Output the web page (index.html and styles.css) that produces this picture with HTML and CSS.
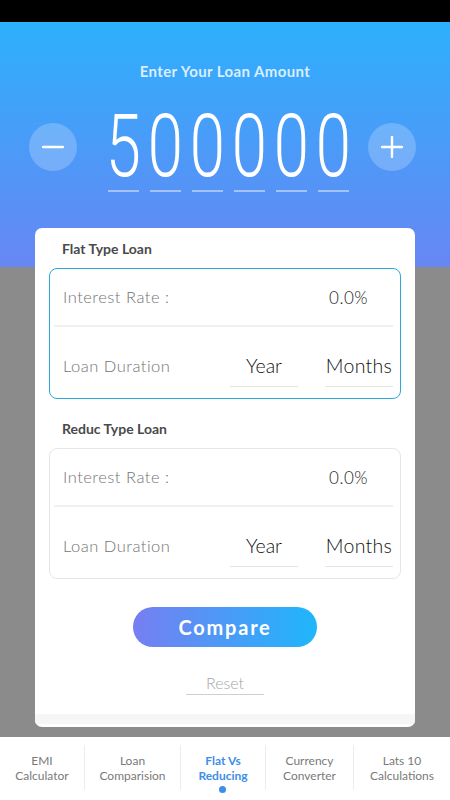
FILE: index.html
```html
<html>
<head>
<meta charset="utf-8">
<link rel="stylesheet" href="styles.css">
<title>Flat Vs Reducing</title>
</head>
<body>
<div class="statusbar"></div>
<div class="main">
  <div class="amount-title">Enter Your Loan Amount</div>
  <div class="amount-row">
    <div class="round-btn minus"><svg width="22" height="22" viewBox="0 0 22 22"><path d="M1 11H21" stroke="#fff" stroke-width="2.4" stroke-linecap="round"/></svg></div>
    <div class="digits">
      <span class="digit"><span>5</span></span>
      <span class="digit"><span>0</span></span>
      <span class="digit"><span>0</span></span>
      <span class="digit"><span>0</span></span>
      <span class="digit"><span>0</span></span>
      <span class="digit"><span>0</span></span>
    </div>
    <div class="round-btn plus"><svg width="22" height="22" viewBox="0 0 22 22"><path d="M1 11H21M11 1V21" stroke="#fff" stroke-width="2.4" stroke-linecap="round"/></svg></div>
  </div>

  <div class="card">
    <div class="section-title">Flat Type Loan</div>
    <div class="loan-box active">
      <div class="rate-row">
        <span class="label">Interest Rate :</span>
        <span class="rate">0.0%</span>
      </div>
      <div class="divider"></div>
      <div class="dur-row">
        <span class="label">Loan Duration</span>
        <span class="dur-field year">Year</span>
        <span class="dur-field months">Months</span>
      </div>
    </div>

    <div class="section-title second">Reduc Type Loan</div>
    <div class="loan-box">
      <div class="rate-row">
        <span class="label">Interest Rate :</span>
        <span class="rate">0.0%</span>
      </div>
      <div class="divider"></div>
      <div class="dur-row">
        <span class="label">Loan Duration</span>
        <span class="dur-field year">Year</span>
        <span class="dur-field months">Months</span>
      </div>
    </div>

    <div class="compare">Compare</div>
    <div class="reset-wrap"><span class="reset">Reset</span></div>
    <div class="card-foot"></div>
  </div>
</div>

<div class="tabbar">
  <div class="tab w1">EMI<br>Calculator</div>
  <div class="tab w2">Loan<br>Comparision</div>
  <div class="tab w3 on">Flat Vs<br>Reducing<span class="dot"></span></div>
  <div class="tab w4">Currency<br>Converter</div>
  <div class="tab w5">Lats 10<br>Calculations</div>
</div>
</body>
</html>
```
FILE: styles.css
```css
body { margin: 0; width: 450px; height: 800px; overflow: hidden;
  font-family: Lato, "Open Sans", sans-serif; background: #fff; }

.statusbar { height: 22px; background: #000; }

.main { height: 715px; box-sizing: border-box; padding-top: 41px;
  background: linear-gradient(to bottom, #2db0fd 0px, #6886f4 245px, #8b8b8b 245px, #8b8b8b 100%); }

.amount-title { text-align: center; color: #d9eeff; font-size: 15px; font-weight: 700;
  line-height: 16px; letter-spacing: 0.4px; }

.amount-row { display: flex; align-items: flex-start; padding-left: 29px; margin-top: 25px; height: 124px; }
.round-btn { width: 48px; height: 48px; border-radius: 50%; background: rgba(255,255,255,0.22);
  display: flex; align-items: center; justify-content: center; margin-top: 19px; }
.round-btn.minus { margin-right: 31px; }
.round-btn.plus { margin-left: 19px; }

.digits { display: flex; gap: 11px; }
.digit { width: 31px; height: 84px; padding-bottom: 2px; border-bottom: 2px solid rgba(255,255,255,0.45);
  color: #fff; font-family: Roboto, sans-serif; font-weight: 300; font-size: 88px;
  line-height: 84px; display: flex; justify-content: center; }
.digit span { display: block; transform: scaleX(0.72); }

.card { margin: 0 35px; height: 499px; background: #fff; border-radius: 7px;
  box-sizing: border-box; padding: 13px 14px 0; position: relative; overflow: hidden; }

.section-title { font-size: 14px; font-weight: 700; color: #4a4a4a; line-height: 16px;
  padding-left: 13px; margin-bottom: 11px; }
.section-title.second { margin-top: 22px; margin-bottom: 11px; }

.loan-box { border: 1px solid #e6e6e6; border-radius: 8px; padding: 0 7px 0 4px; }
.loan-box.active { border-color: #2aa9df; }

.rate-row { display: flex; align-items: center; height: 56px; padding-left: 9px; }
.label { color: #747474; font-size: 16.5px; font-weight: 300; letter-spacing: 0.5px; }
.rate { margin-left: auto; margin-right: 25px; color: #222; font-size: 17px; font-weight: 300; letter-spacing: 0.5px; }

.divider { height: 2px; background: #f0f0f0; }

.dur-row { display: flex; align-items: flex-end; height: 71px; padding-left: 9px; }
.dur-row .label { margin-bottom: 22px; }
.dur-field { color: #111; font-size: 19.5px; font-weight: 300; text-align: center;
  border-bottom: 1px solid #e5e5e5; padding-bottom: 9px; margin-bottom: 11px; }
.dur-field.year { width: 68px; margin-left: auto; }
.dur-field.months { width: 68px; margin-left: 27px; letter-spacing: 0.3px; }

.compare { width: 184px; height: 40px; margin: 28px auto 0; border-radius: 20px;
  background: linear-gradient(to right, #777ef1, #1fb6fc); color: #fff;
  font-size: 20px; font-weight: 700; letter-spacing: 1.8px; text-align: center; line-height: 40px; }

.reset-wrap { text-align: center; margin-top: 26px; }
.reset { display: inline-block; width: 78px; color: #a6a6a6; font-size: 16px; font-weight: 300;
  border-bottom: 1px solid #cfcfcf; padding-bottom: 2px; }

.card-foot { position: absolute; left: 0; right: 0; bottom: 3px; height: 10px; background: #f6f6f6; }

.tabbar { display: flex; height: 63px; background: #fff; }
.tab { position: relative; box-sizing: border-box; text-align: center;
  color: #7a7a7a; font-size: 12px; line-height: 15px; font-weight: 400;
  border-right: 1px solid #ececec; margin: 8px 0 10px; padding-top: 8px; }
.tab.w1 { width: 85px; }
.tab.w2 { width: 96px; }
.tab.w3 { width: 85px; }
.tab.w4 { width: 88px; }
.tab.w5 { width: 96px; border-right: none; }
.tab.on { color: #3c8ee8; font-weight: 700; }
.dot { position: absolute; left: 50%; bottom: -3px; width: 7px; height: 7px; margin-left: -4px;
  border-radius: 50%; background: #3c8ee8; }
```
